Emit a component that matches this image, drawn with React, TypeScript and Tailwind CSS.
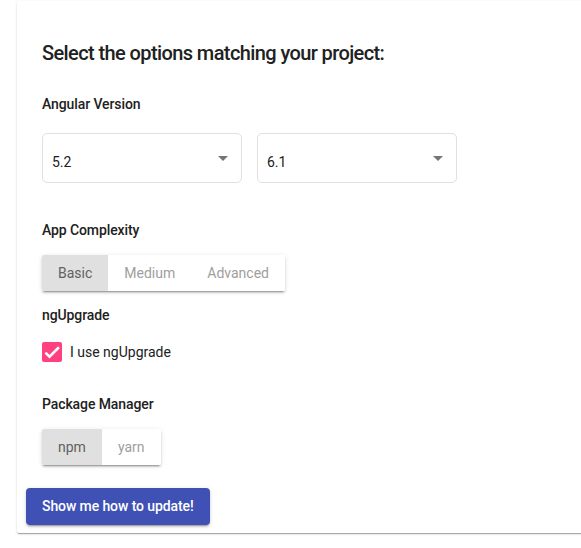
import { useState } from "react";

const Label = ({ children, className = "" }: { children: React.ReactNode; className?: string }) => (
  <div className={`text-[14px] leading-5 font-medium tracking-[-0.1px] text-[#212121] ${className}`}>{children}</div>
);

const Select = ({ value }: { value: string }) => (
  <div className="flex w-[200px] h-[50px] items-start justify-between rounded-[5px] border border-[#e0e0e0] pl-[9px] pr-[13px]">
    <span className="mt-[18px] text-[14px] leading-5 text-[#212121]">{value}</span>
    <span className="mt-[22px] h-0 w-0 border-x-[5px] border-t-[5px] border-x-transparent border-t-[#757575]" />
  </div>
);

const Toggle = ({ options, selected }: { options: string[]; selected: string }) => (
  <div className="flex h-9 w-fit overflow-hidden rounded-[2px] shadow-[0_3px_1px_-2px_rgba(0,0,0,0.2),0_2px_2px_0_rgba(0,0,0,0.14),0_1px_5px_0_rgba(0,0,0,0.12)]">
    {options.map((o) => (
      <div
        key={o}
        className={
          o === selected
            ? "flex items-center bg-[#e0e0e0] px-4 text-[14px] text-[#616161]"
            : "flex items-center bg-white px-4 text-[14px] text-[#9e9e9e]"
        }
      >
        {o}
      </div>
    ))}
  </div>
);

export default function App() {
  const [checked, setChecked] = useState(true);

  return (
    <div className="h-[548px] w-full overflow-hidden bg-white font-['Roboto',sans-serif]">
      <div className="ml-[17px] mt-px w-[620px] rounded-[2px] bg-white pl-[25px] pt-9 pb-2 shadow-[0_2px_1px_-1px_rgba(0,0,0,0.2),0_1px_1px_0_rgba(0,0,0,0.14),0_1px_3px_0_rgba(0,0,0,0.12)]">
        <h2 className="text-[20px] leading-8 font-medium tracking-[-0.6px] text-[#212121]">Select the options matching your project:</h2>

        <Label className="mt-[25px]">Angular Version</Label>
        <div className="mt-[19px] flex gap-[15px]">
          <Select value="5.2" />
          <Select value="6.1" />
        </div>

        <Label className="mt-[37px]">App Complexity</Label>
        <div className="mt-[15px]">
          <Toggle options={["Basic", "Medium", "Advanced"]} selected="Basic" />
        </div>

        <Label className="mt-[14px]">ngUpgrade</Label>
        <label className="mt-[17px] flex cursor-pointer items-center gap-2" onClick={() => setChecked(!checked)}>
          <span className={checked ? "flex h-5 w-5 items-center justify-center rounded-[2px] bg-[#ff4081]" : "h-5 w-5 rounded-[2px] border-2 border-[#757575]"}>
            {checked && (
              <svg viewBox="0 0 24 24" className="h-5 w-5">
                <path d="M4.1 12.7 9 17.6 20.3 6.3" fill="none" stroke="white" strokeWidth="3" />
              </svg>
            )}
          </span>
          <span className="text-[14px] leading-5 text-[#212121]">I use ngUpgrade</span>
        </label>

        <Label className="mt-8">Package Manager</Label>
        <div className="mt-[15px]">
          <Toggle options={["npm", "yarn"]} selected="npm" />
        </div>

        <button className="mt-[23px] -ml-4 h-[37px] rounded px-4 text-[14px] font-medium tracking-[-0.1px] text-white bg-[#3f51b5] shadow-[0_3px_1px_-2px_rgba(0,0,0,0.2),0_2px_2px_0_rgba(0,0,0,0.14),0_1px_5px_0_rgba(0,0,0,0.12)]">
          Show me how to update!
        </button>
      </div>
    </div>
  );
}
